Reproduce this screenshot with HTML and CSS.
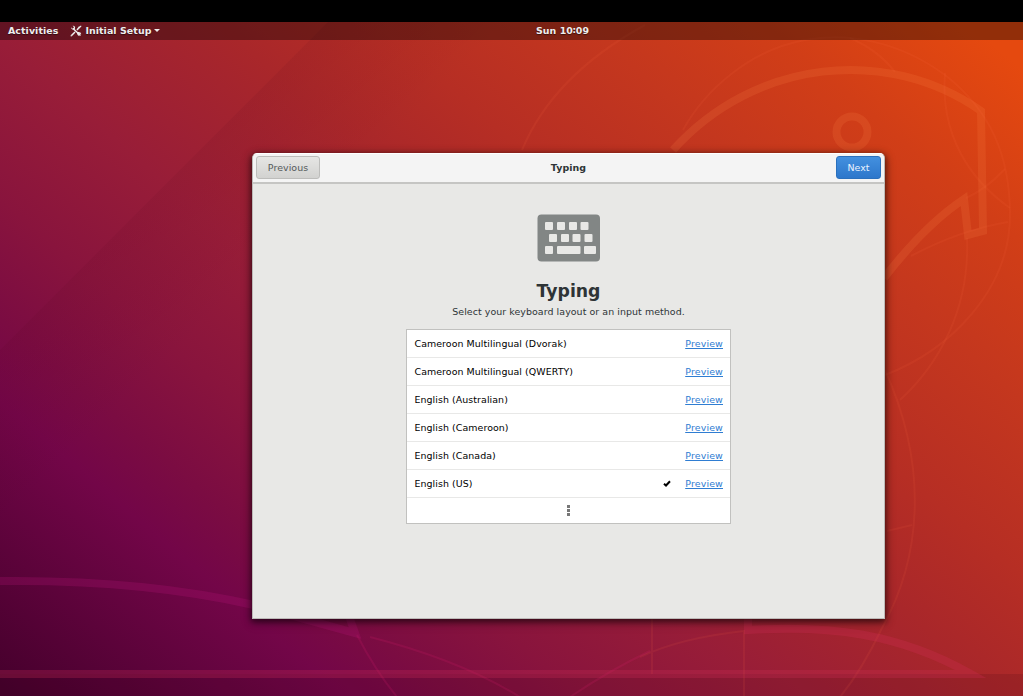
FILE: index.html
```html
<!DOCTYPE html>
<html lang="en">
<head>
<meta charset="utf-8">
<title>Initial Setup</title>
<link rel="stylesheet" href="styles.css">
</head>
<body>
<div class="screen">
  <svg class="wallpaper" viewBox="0 0 1023 696" aria-hidden="true">
    <defs>
      <linearGradient id="sky" gradientUnits="userSpaceOnUse" x1="-341" y1="398" x2="422" y2="-494">
        <stop offset="0" stop-color="#45002c"/>
        <stop offset=".187" stop-color="#730648"/>
        <stop offset=".24" stop-color="#7b0c42"/>
        <stop offset=".317" stop-color="#89143d"/>
        <stop offset=".42" stop-color="#981d38"/>
        <stop offset=".552" stop-color="#a9272a"/>
        <stop offset=".639" stop-color="#b62e24"/>
        <stop offset=".754" stop-color="#c4371e"/>
        <stop offset=".855" stop-color="#d13e17"/>
        <stop offset=".968" stop-color="#e5490f"/>
      </linearGradient>
      <linearGradient id="fold" gradientUnits="userSpaceOnUse" x1="175" y1="175" x2="265" y2="265">
        <stop offset="0" stop-color="#500018" stop-opacity=".08"/>
        <stop offset="1" stop-color="#500018" stop-opacity="0"/>
      </linearGradient>
    </defs>
    <rect width="1023" height="696" fill="url(#sky)"/>
    <path d="M350 0L0 350V696H1023V0z" fill="url(#fold)"/>
    <path d="M0 674H975L1023 674V696H0z" fill="#300010" opacity=".13"/>
    <g class="thin-lines">
      <path d="M522 150C545 95 590 55 645 25"/>
      <path d="M683 130C705 90 750 50 805 40C850 32 900 42 945 75C990 110 1010 155 1010 215C1010 290 950 350 885 375"/>
      <path d="M850 38Q878 50 895 72M945 73C940 135 970 180 1010 208"/>
      <path d="M966 198Q985 190 1005 169M911 256Q960 230 1008 222M967 238C970 310 938 365 900 400"/>
      <path d="M885 370C930 470 920 560 882 628Q862 670 840 697M887 531L912 525"/>
      <path d="M652 619V674M744 630V696M640 657Q680 638 744 631"/>
    </g>
    <g class="thin-lines rose">
      <path d="M357 635Q375 670 397 697M370 637Q460 660 520 697M570 697Q610 670 650 651"/>
    </g>
    <g class="thick-lines">
      <path class="head" d="M673 150C755 59 887 45 981 111L983 231L968 235L964 199Q925 225 884 278"/>
      <circle class="head" cx="852" cy="132" r="15.500"/>
      <path d="M0 581C90 580 180 588 254 605L355 633L345 605"/>
      <path class="tail" d="M748 608V630C830 625 898 633 971 674H0"/>
    </g>
  </svg>

  <div class="blank"></div>
  <header class="topbar">
    <div class="menus">
      <span>Activities</span>
      <span class="app">
        <svg class="tools" viewBox="0 0 12 12" aria-hidden="true">
          <path d="M3 3.500L10.500 10.500M1.500 10.500L5 7M7 5L9.500 2" stroke="currentColor" stroke-width="1.500"/>
          <path d="M1 2.200L2.700 3.700L4 2.300L2.600 .7C4.700 .4 5.700 2.200 4.800 3.900C3.500 5.300 1.200 4.500 1 2.200zM8.500 2L11 .5L11.500 1.200L9.500 3.500zM8 7Q11 6.800 11.300 9.200L9.700 8.700L8.800 9.500L9.400 11.300Q7 10.500 7 8zM1 9.800L2.300 11L1 11.500L.5 11z" fill="currentColor"/>
        </svg>
        <span>Initial Setup</span>
        <span class="caret"></span>
      </span>
    </div>
    <div class="clock">Sun 10∶09</div>
    <div></div>
  </header>

  <main class="window">
    <div class="titlebar">
      <div class="side"><button class="button">Previous</button></div>
      <div class="title">Typing</div>
      <div class="side end"><button class="button next">Next</button></div>
    </div>
    <section class="content">
      <svg class="keyboard" viewBox="0 0 63 48" aria-hidden="true">
        <rect x=".500" y=".500" width="62.500" height="47" rx="4" fill="#828685"/>
        <g fill="#e8e8e6">
          <rect x="8" y="8" width="8" height="8" rx="1"/><rect x="20" y="8" width="8" height="8" rx="1"/><rect x="32" y="8" width="8" height="8" rx="1"/><rect x="43.500" y="8" width="8" height="8" rx="1"/>
          <rect x="12" y="20" width="8" height="8" rx="1"/><rect x="24" y="20" width="8" height="8" rx="1"/><rect x="35.500" y="20" width="8" height="8" rx="1"/><rect x="47.500" y="20" width="8" height="8" rx="1"/>
          <rect x="8" y="32" width="8" height="8" rx="1"/><rect x="20" y="32" width="23.500" height="8" rx="1"/><rect x="47" y="32" width="12" height="8" rx="1"/>
        </g>
      </svg>
      <h1 class="heading">Typing</h1>
      <p class="hint">Select your keyboard layout or an input method.</p>
      <ul class="layouts">
        <li class="row"><span>Cameroon Multilingual (Dvorak)</span><a class="preview">Preview</a></li>
        <li class="row"><span>Cameroon Multilingual (QWERTY)</span><a class="preview">Preview</a></li>
        <li class="row"><span>English (Australian)</span><a class="preview">Preview</a></li>
        <li class="row"><span>English (Cameroon)</span><a class="preview">Preview</a></li>
        <li class="row"><span>English (Canada)</span><a class="preview">Preview</a></li>
        <li class="row"><span>English (US)</span>
          <svg class="check" viewBox="0 0 8 7" aria-hidden="true"><path d="M1 3.700L3 5.500L7 1.200" fill="none" stroke="#000" stroke-width="2"/></svg>
          <a class="preview">Preview</a></li>
        <li class="more"><i></i><i></i><i></i></li>
      </ul>
    </section>
  </main>
</div>
</body>
</html>
```

FILE: styles.css
```css
* { box-sizing: border-box; }
body { margin: 0; font-family: "DejaVu Sans", sans-serif; font-size: 9.45px; letter-spacing: .06px; color: #2e3436; }
.screen { position: relative; width: 1023px; height: 696px; overflow: hidden; display: flex; flex-direction: column; align-items: center; }
.wallpaper { position: absolute; inset: 0; width: 1023px; height: 696px; }
.thin-lines { fill: none; stroke: #ff7040; stroke-opacity: .1; stroke-width: 2; }
.thin-lines.rose { stroke: #e02070; stroke-opacity: .16; }
.thick-lines { fill: none; stroke: #c01880; stroke-opacity: .22; stroke-width: 8; }
.thick-lines .head { stroke: #ff8848; stroke-opacity: .16; }
.thick-lines .tail { stroke: #d43058; stroke-opacity: .26; }
.blank { position: relative; flex: none; width: 100%; height: 22px; background: #000; }
.topbar { position: relative; flex: none; width: 100%; height: 18px; padding: 0 8px; display: grid; grid-template-columns: 1fr auto 1fr; align-items: center; background: rgba(0, 0, 0, .36); color: #eee; font-weight: bold; line-height: 16px; padding-bottom: 1px; text-shadow: 0 1px 1px rgba(0, 0, 0, .5); }
.menus { display: flex; gap: 12px; }
.app { display: flex; align-items: center; gap: 3px; }
.tools { width: 12px; height: 12px; }
.caret { border: 3px solid transparent; border-top-color: #eee; border-bottom: 0; }
.clock { margin-left: 102px; }
.window { position: relative; flex: none; width: 633px; height: 466px; margin: 113px 0 0 114px; display: flex; flex-direction: column; border-radius: 5px 5px 0 0; background: #e8e8e6; border: 1px solid #bcbab8; border-top-color: #fff; box-shadow: 0 2px 6px 1px rgba(0, 0, 0, .55), 0 3px 12px rgba(0, 0, 0, .25); }
.titlebar { flex: none; height: 30px; padding: 2px 3px 3px; display: grid; grid-template-columns: 1fr auto 1fr; align-items: center; background: #f4f4f4; border-bottom: 2px solid #c5c5c3; border-radius: 4px 4px 0 0; }
.side { display: flex; }
.side.end { justify-content: flex-end; }
.button { width: 64px; height: 23px; padding: 0; font: inherit; letter-spacing: inherit; color: #555a5b; background: linear-gradient(#e6e6e4, #d2d2d0); border: 1px solid #bdbdbb; border-radius: 3px; }
.button.next { width: 45px; color: #e8f2ff; background: linear-gradient(#4390df, #2d77cb); border-color: #2a70bd; }
.title { font-weight: bold; }
.content { display: flex; flex-direction: column; align-items: center; padding-top: 30px; }
.keyboard { width: 63px; height: 48px; }
.heading { margin: 18px 0 0; font-size: 17.3px; line-height: 22px; letter-spacing: 0; }
.hint { margin: 3px 0 0; line-height: 14px; }
.layouts { list-style: none; width: 325px; margin: 10px 0 0; padding: 0; background: #fff; border: 1px solid #c1c1bf; }
.row { height: 28px; padding: 0 7px 0 7.500px; display: flex; align-items: center; border-bottom: 1px solid #e8e8e7; color: #000; }
.row span { flex: 1; }
.preview { color: #2f7dd2; text-decoration: underline; letter-spacing: .15px; }
.check { width: 8px; height: 7px; margin-right: 14px; }
.more { height: 25px; display: flex; flex-direction: column; align-items: center; justify-content: center; gap: 1px; }
.more i { width: 3px; height: 3px; background: #777; }
```
